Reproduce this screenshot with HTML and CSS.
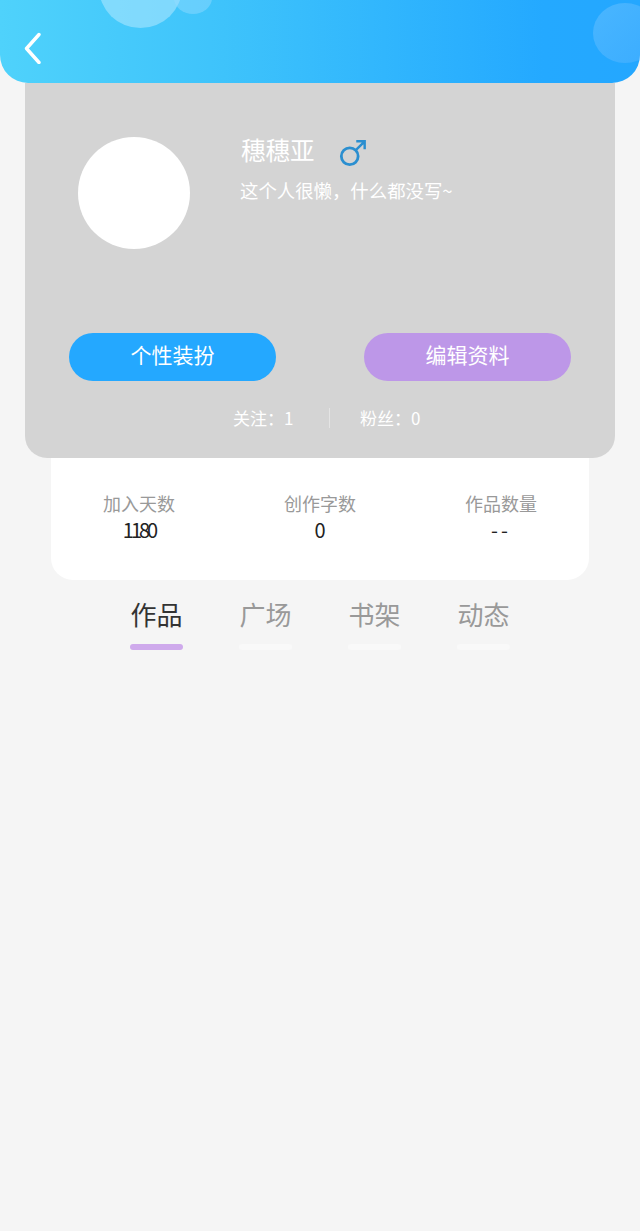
FILE: index.html
```html
<!DOCTYPE html>
<html lang="zh-CN">
<head>
  <meta charset="UTF-8">
  <title>个人主页</title>
  <link rel="stylesheet" href="styles.css">
</head>
<body>
  <!-- Top bar -->
  <div class="topbar">
    <span class="bubble bubble-big"></span>
    <span class="bubble bubble-small"></span>
    <span class="bubble bubble-right"></span>
    <svg class="back" width="20" height="32" viewBox="0 0 20 32">
      <path d="M17 2.5 L4.5 16.5 L17 30.5" fill="none" stroke="#fff" stroke-width="3.4" stroke-linecap="round" stroke-linejoin="round"/>
    </svg>
  </div>

  <!-- Profile card -->
  <div class="card">
    <div class="profile">
      <div class="avatar"></div>
      <div class="info">
        <div class="name-row">
          <span class="name">穗穗亚</span>
          <svg class="gender" width="28" height="28" viewBox="0 0 30 30">
            <circle cx="11.5" cy="18.5" r="9" fill="none" stroke="#2b8fd0" stroke-width="3"/>
            <path d="M18 12 L27.5 2.5 M18.5 2.5 H27.5 V11" fill="none" stroke="#2b8fd0" stroke-width="2.6"/>
          </svg>
        </div>
        <p class="bio">这个人很懒，什么都没写~</p>
      </div>
    </div>
    <div class="actions">
      <div class="btn btn-blue">个性装扮</div>
      <div class="btn btn-purple">编辑资料</div>
    </div>
    <div class="follow">
      <span class="follow-item">关注：1</span>
      <span class="divider"></span>
      <span class="follow-item">粉丝：0</span>
    </div>
  </div>

  <!-- Stats -->
  <div class="stats">
    <div class="stat">
      <div class="stat-label">加入天数</div>
      <div class="stat-value tight">1180</div>
    </div>
    <div class="stat">
      <div class="stat-label">创作字数</div>
      <div class="stat-value">0</div>
    </div>
    <div class="stat">
      <div class="stat-label">作品数量</div>
      <div class="stat-value wide">--</div>
    </div>
  </div>

  <!-- Tabs -->
  <div class="tabs">
    <div class="tab active">作品</div>
    <div class="tab">广场</div>
    <div class="tab">书架</div>
    <div class="tab">动态</div>
  </div>
</body>
</html>
```

FILE: styles.css
```css
body {
  margin: 0;
  min-height: 1231px;
  background-color: #f5f5f5;
  font-family: "Noto Sans CJK SC", "Noto Sans", sans-serif;
  overflow: hidden;
}
/* Top bar */
.topbar {
  position: relative;
  height: 83px;
  overflow: hidden;
  border-radius: 0 0 28px 28px;
  background: linear-gradient(90deg, #4fd2fb 0%, #3ec3fb 35%, #24a9ff 85%, #24a7ff 100%);
}
.back {
  position: absolute;
  left: 22px;
  top: 32px;
}
.bubble {
  position: absolute;
  border-radius: 50%;
}
.bubble-big {
  left: 99px;
  top: -53px;
  width: 83px;
  height: 81px;
  background: rgba(190, 235, 255, 0.5);
}
.bubble-small {
  left: 174px;
  top: -18px;
  width: 38px;
  height: 32px;
  background: rgba(150, 220, 255, 0.45);
}
.bubble-right {
  left: 593px;
  top: 3px;
  width: 64px;
  height: 60px;
  background: linear-gradient(135deg, rgba(110, 195, 255, 0.5), rgba(110, 185, 255, 0.3));
}
/* Profile card */
.card {
  height: 375px;
  margin: 0 25px;
  background-color: #d4d4d4;
  border-radius: 0 0 22px 22px;
  color: #fff;
}
.profile {
  display: flex;
  gap: 51px;
  height: 250px;
  padding: 52px 0 0 53px;
  box-sizing: border-box;
}
.avatar {
  width: 112px;
  height: 112px;
  margin-top: 2px;
  border-radius: 50%;
  background: #fff;
}
.name-row {
  display: flex;
  align-items: flex-start;
  gap: 24px;
}
.name {
  font-size: 24.5px;
  line-height: 30px;
}
.gender {
  margin-top: 4px;
}
.bio {
  margin: 10px 0 0 -1px;
  font-size: 18.4px;
  line-height: 26px;
}
.actions {
  display: flex;
  justify-content: space-between;
  padding: 0 44px;
}
.btn {
  width: 207px;
  height: 48px;
  border-radius: 24px;
  font-size: 21px;
  line-height: 42px;
  text-align: center;
}
.btn-blue {
  background-color: #24a8ff;
}
.btn-purple {
  background-color: #bd97e8;
}
.follow {
  display: flex;
  align-items: center;
  justify-content: center;
  gap: 30px;
  margin-top: 25px;
  padding-left: 19px;
  font-size: 17px;
  line-height: 24px;
}
.follow-item {
  width: 66px;
  white-space: nowrap;
}
.divider {
  width: 1px;
  height: 20px;
  background: #e4e4e4;
}
/* Stats */
.stats {
  display: flex;
  justify-content: space-between;
  height: 122px;
  margin: 0 51px;
  padding: 32px 52px 0;
  box-sizing: border-box;
  background: #fff;
  border-radius: 0 0 22px 22px;
  text-align: center;
}
.stat-label {
  font-size: 18px;
  line-height: 26px;
  color: #999;
}
.stat-value {
  font-size: 20px;
  line-height: 28px;
  color: #222;
}
.stat-value.tight {
  letter-spacing: -3px;
}
.stat-value.wide {
  letter-spacing: 3px;
}
/* Tabs */
.tabs {
  display: flex;
  margin-top: 17px;
  padding-left: 130px;
  gap: 56px;
}
.tab {
  width: 53px;
  font-size: 26px;
  line-height: 33px;
  color: #999;
  text-align: center;
  white-space: nowrap;
}
.tab::after {
  content: "";
  display: block;
  height: 6px;
  margin-top: 14px;
  border-radius: 3px;
  background: #f9f9f9;
}
.tab.active {
  color: #333;
}
.tab.active::after {
  background: #cfaaec;
}
```
